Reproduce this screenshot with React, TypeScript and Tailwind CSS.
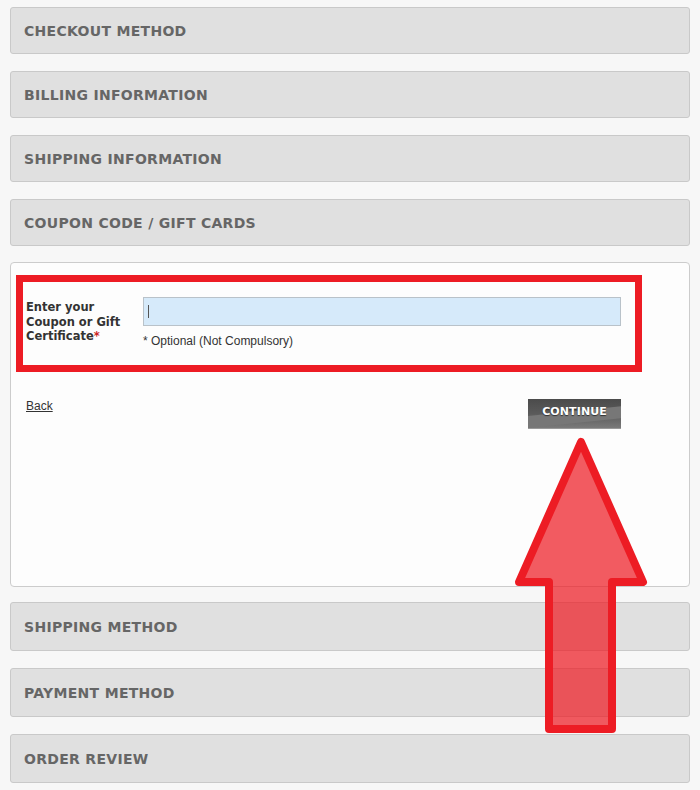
import React from 'react';

const TOP_STEPS = ['CHECKOUT METHOD', 'BILLING INFORMATION', 'SHIPPING INFORMATION', 'COUPON CODE / GIFT CARDS'];
const BOTTOM_STEPS = ['SHIPPING METHOD', 'PAYMENT METHOD', 'ORDER REVIEW'];

const StepBar: React.FC<{ title: string; tall?: boolean }> = ({ title, tall }) => (
  <div
    className={`flex items-center px-[13px] bg-[#e0e0e0] border border-[#c9c9c9] rounded-[3px] ${tall ? 'h-[49px]' : 'h-[47px]'}`}
  >
    <span className="text-[14px] font-bold tracking-[0.3px] text-[#666666] font-['DejaVu_Sans',Verdana,sans-serif] mt-[1px]">
      {title}
    </span>
  </div>
);

const App: React.FC = () => {
  return (
    <div className="relative w-[700px] h-[790px] bg-[#f7f7f7] px-[10px] pt-[7px] overflow-hidden">
      <div className="flex flex-col gap-[17px]">
        {TOP_STEPS.map((s) => (
          <StepBar key={s} title={s} />
        ))}

        <div className="-mt-[1px] -mb-[2px] h-[325px] bg-[#fdfdfd] border border-[#cccccc] rounded-[4px] px-[5px] pt-[12px]">
          <div className="h-[97px] border-[7px] border-[#ed1c24] w-[626px] flex pl-[3px] pt-[15px]">
            <div className="w-[117px] text-[11.5px] leading-[14.5px] font-bold text-[#333333] font-['DejaVu_Sans',Verdana,sans-serif] pt-[3px]">
              Enter your Coupon or Gift Certificate<span className="text-[#cc2222]">*</span>
            </div>
            <div className="flex flex-col">
              <div className="w-[478px] h-[29px] bg-[#d6eafa] border border-[#b9c2c9] flex items-center pl-[4px]">
                <span className="w-px h-[13px] bg-[#555555]" />
              </div>
              <span className="mt-[6px] text-[12px] text-[#333333] font-['Liberation_Sans',Arial,sans-serif]">
                * Optional (Not Compulsory)
              </span>
            </div>
          </div>

          <div className="flex justify-between items-start mt-[27px] pl-[10px] pr-[63px]">
            <a className="-mt-[2px] text-[12px] underline text-[#333333] font-['Liberation_Sans',Arial,sans-serif] cursor-pointer">
              Back
            </a>
            <button className="relative w-[93px] h-[30px] overflow-hidden bg-gradient-to-b from-[#4b4b4b] via-[#5a5a5a] to-[#7a7a7a] border-b border-[#999999] flex items-center justify-center">
              <span className="absolute left-0 right-0 bottom-0 h-[12px] bg-[#777777] skew-y-[-6deg] origin-bottom-left" />
              <span className="relative text-[11px] font-bold text-white tracking-[0.1px] font-['DejaVu_Sans',Verdana,sans-serif] [text-shadow:0_1px_1px_rgba(0,0,0,0.6)] -mt-[2px]">
                CONTINUE
              </span>
            </button>
          </div>
        </div>

        {BOTTOM_STEPS.map((s) => (
          <StepBar key={s} title={s} tall />
        ))}
      </div>

      <svg className="absolute left-0 top-0 pointer-events-none" width="700" height="790" viewBox="0 0 700 790">
        <polygon
          points="581,442 643,582 612,582 612,729 549,729 549,582 519,582"
          fill="#ed1c24"
          fillOpacity="0.72"
          stroke="#ed1c24"
          strokeWidth="8"
          strokeLinejoin="round"
        />
      </svg>
    </div>
  );
};

export default App;
